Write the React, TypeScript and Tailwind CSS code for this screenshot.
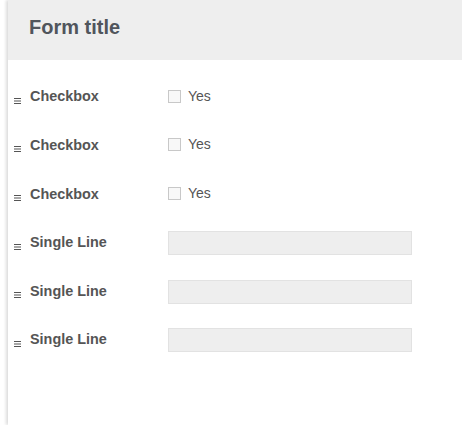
import React from "react";

const font = { fontFamily: '"Liberation Sans", Arial, sans-serif' };

function DragIcon() {
  return (
    <svg width="7" height="6" viewBox="0 0 7 6" className="mt-[7px] block">
      <rect x="0" y="0" width="7" height="1" fill="#555" />
      <rect x="0" y="2.5" width="7" height="1" fill="#555" />
      <rect x="0" y="5" width="7" height="1" fill="#555" />
    </svg>
  );
}

function Row({ label, kind }: { label: string; kind: "check" | "text" }) {
  return (
    <div className="flex h-[48.6px] items-center pl-[6px]">
      <span className="w-[16px] flex items-center">
        <DragIcon />
      </span>
      <span className="w-[138px] text-[14.4px] font-bold text-[#555]">{label}</span>
      {kind === "check" ? (
        <label className="-mt-[2px] flex items-center">
          <span className="box-border block h-[13px] w-[13px] border border-[#c8c8c8] bg-[#f8f8f8]" />
          <span className="ml-[7px] text-[14px] text-[#555]">Yes</span>
        </label>
      ) : (
        <div className="box-border h-[24px] w-[244px] border border-[#e2e2e2] bg-[#eeeeee]" />
      )}
    </div>
  );
}

export default function App() {
  return (
    <div className="h-[425px] w-full overflow-hidden bg-white" style={font}>
      <div className="ml-[8px] h-full bg-white shadow-[-2px_0_3px_rgba(0,0,0,0.14)]">
        <div className="flex h-[60px] items-center bg-[#eeeeee] pb-[6px] pl-[21px]">
          <h1 className="text-[20px] font-bold text-[#50555c]">Form title</h1>
        </div>
        <div className="pt-[13px]">
          <Row label="Checkbox" kind="check" />
          <Row label="Checkbox" kind="check" />
          <Row label="Checkbox" kind="check" />
          <Row label="Single Line" kind="text" />
          <Row label="Single Line" kind="text" />
          <Row label="Single Line" kind="text" />
        </div>
      </div>
    </div>
  );
}
